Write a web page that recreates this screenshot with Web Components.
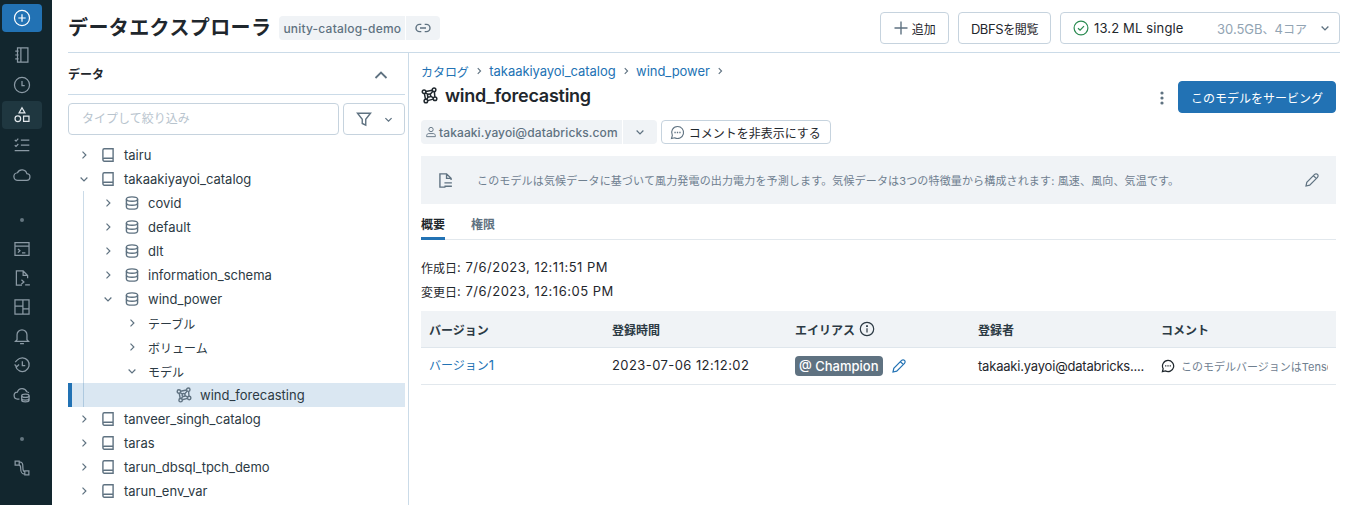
<!DOCTYPE html>
<html lang="ja">
<head>
<meta charset="utf-8">
<title>データエクスプローラ</title>
<style>
html, body { margin: 0; height: 100%; overflow: hidden; background: #fff; }
body {
    font-family: Inter, "Noto Sans CJK JP", sans-serif;
    font-size: 13px;
    color: #1f272d;
}
</style>
</head>
<body>
<explorer-app></explorer-app>

<script>
const ICONS = {
    plus: '<path d="M8 1.5v13M1.5 8h13"/>',
    'plus-circle': '<circle cx="8" cy="8" r="6.7"/><path d="M8 4.7v6.6M4.7 8h6.6"/>',
    notebook: '<path d="M4 1.75h9.25v12.5H4zM7 1.75v12.5M2 4.5h3M2 8h3M2 11.5h3"/>',
    clock: '<circle cx="8" cy="8" r="6.7"/><path d="M8 4.5V8.6h2.4"/>',
    shapes: '<path d="M8 1.5l2.6 4.6H5.4z"/><circle cx="4.3" cy="11.3" r="2.5"/><path d="M9.4 8.9h4.8v4.8H9.4z"/>',
    tasks: '<path d="M1.6 3.4l1.1 1.1 2-2.2M1.6 8.2l1.1 1.1 2-2.2M7 3.6h7.5M7 8.2h7.5M1.5 13h13"/>',
    cloud: '<path d="M4.4 12.8h7.4a3 3 0 0 0 .5-6A4.4 4.4 0 0 0 4 6a3.4 3.4 0 0 0 .4 6.8z"/>',
    terminal: '<path d="M1.75 2.25h12.5v11.5H1.75zM1.75 5.5h12.5M4.4 8l1.8 1.6-1.8 1.6M8 11.4h3"/>',
    'file-code': '<path d="M8 14.25H3V1.75h6l4 4v2.5M9 1.75v4h4M7.5 9.6l2.2 1.9-2.2 1.9M10.8 14.2H15"/>',
    dashboard: '<path d="M1.75 1.75h12.5v12.5H1.75zM8.8 1.75v12.5M1.75 7.2h7M8.8 9.6h5.45"/>',
    bell: '<path d="M3.6 11.3V6.9a4.4 4.4 0 0 1 8.8 0v4.4l1.4 1.5H2.2zM6.3 14.7h3.4"/>',
    history: '<path d="M2.4 9.3A6.1 6.1 0 1 0 3.7 3.7L2 5.4M1.4 7.5l2 1.9 2-1.9M8.3 4.6v4h2.6"/>',
    'cloud-db': '<path d="M5.7 12.5H4.3a3.1 3.1 0 0 1-.4-6.2 4.4 4.4 0 0 1 8.3-.3 3 3 0 0 1 1.9 1"/><ellipse cx="11" cy="9.6" rx="3.3" ry="1.5"/><path d="M7.7 9.6v3.9c0 .8 1.5 1.4 3.3 1.4s3.3-.6 3.3-1.4V9.6M7.7 12c0 .8 1.5 1.4 3.3 1.4s3.3-.6 3.3-1.4"/>',
    path: '<path d="M1.9 1.9h3.6v3.6H1.9zM10.5 10.5h3.6v3.6h-3.6zM5.5 2.6c3 0 3.3 1.4 3.3 5 0 3 .4 3.7 1.7 3.7M5.2 5.5c1.2 0 1.6.6 1.6 2.6 0 4 .8 5.3 3.7 5.3"/>',
    'chevron-right': '<path d="M6 3.5L10.5 8 6 12.5"/>',
    'chevron-down': '<path d="M3.5 6L8 10.5 12.5 6"/>',
    'chevron-up': '<path d="M2.5 11L8 5.5l5.5 5.5"/>',
    filter: '<path d="M1.5 2.25h13L9.75 8.2v5.9l-3.5-1.6V8.2z"/>',
    book: '<path d="M2.9 12.6V3.2c0-.8.6-1.45 1.4-1.45h8.8v12.5H4.3c-.8 0-1.4-.7-1.4-1.65zM2.9 12.5c0-.7.6-1.2 1.4-1.2h8.8"/>',
    db: '<path d="M2.4 4.1C2.4 2.8 4.9 1.9 8 1.9s5.6.9 5.6 2.2v7.8c0 1.3-2.5 2.2-5.6 2.2s-5.6-.9-5.6-2.2z"/><path d="M2.4 4.1c0 1.3 2.5 2.2 5.6 2.2s5.6-.9 5.6-2.2M2.4 8c0 1.3 2.5 2.2 5.6 2.2s5.6-.9 5.6-2.2"/>',
    model: '<circle cx="2.9" cy="4.5" r="1.7"/><circle cx="12.3" cy="2.7" r="1.7"/><circle cx="13.2" cy="11" r="1.7"/><circle cx="4.6" cy="13.2" r="1.7"/><circle cx="7.6" cy="8" r="1.5"/><path d="M4.5 4.2l6.1-1.2M4.2 5.6l2.3 1.4M11.2 4l-2.5 2.9M12.6 4.4l.4 4.9M9 8.6l2.7 1.6M6.7 9.3l-1.3 2.4M6.2 12.8l5.4-1.4M3.2 6.2l1 5.3"/>',
    user: '<circle cx="8" cy="4.7" r="2.9"/><path d="M2.2 14.2v-1.4c0-1.5 1.3-2.7 2.8-2.7h6c1.5 0 2.8 1.2 2.8 2.7v1.4z"/>',
    comment: '<path d="M8 1.6a6.4 6.4 0 1 1-3 12L1.6 14.4l.9-3.3A6.4 6.4 0 0 1 8 1.6z"/><path class="solid" d="M4.7 7.1h1.4v1.6H4.7zM7.3 7.1h1.4v1.6H7.3zM9.9 7.1h1.4v1.6H9.9z"/>',
    doc: '<path d="M8 14.25H2.75V1.75H9l4.25 4.25v1.5M9 1.75V6h4.25M7 10.2h7M7 13.4h7"/>',
    pencil: '<path d="M2 14l.8-3.7 7.8-7.9a1.9 1.9 0 0 1 2.9 2.9l-7.8 7.9zM9.4 3.6l2.9 2.9"/>',
    info: '<circle cx="8" cy="8" r="6.7"/><path d="M8 7.2v4.2"/><path class="solid" d="M7.1 4.2h1.8V6H7.1z"/>',
    link: '<path d="M6.3 4.4H4.6a3.6 3.6 0 0 0 0 7.2h1.7M9.7 4.4h1.7a3.6 3.6 0 0 1 0 7.2H9.7M5 8h6"/>',
    check: '<circle cx="8" cy="8" r="6.9"/><path d="M5 8.2l2.1 2 3.9-4"/>',
    kebab: '<circle class="solid" cx="8" cy="3" r="1.6"/><circle class="solid" cx="8" cy="8" r="1.6"/><circle class="solid" cx="8" cy="13" r="1.6"/>'
};

class UiIcon extends HTMLElement {
    connectedCallback() {
        const size = this.getAttribute('size') || 16;
        const weight = this.getAttribute('weight') || 1.4;
        this.attachShadow({ mode: 'open' }).innerHTML = `
        <style>
        :host { display: inline-flex; flex: none; width: ${size}px; height: ${size}px; color: inherit; }
        svg { width: 100%; height: 100%; fill: none; stroke: currentColor; stroke-width: ${weight}; }
        .solid { fill: currentColor; stroke: none; }
        </style>
        <svg viewBox="0 0 16 16">${ICONS[this.getAttribute('name')] || ''}</svg>`;
    }
}
customElements.define('ui-icon', UiIcon);

// the japanese glyphs in the reference run 1px smaller than the latin ones
class JaText extends HTMLElement {
    constructor() {
        super();
        // no whitespace here, the host is inline and it would show as a space
        this.attachShadow({ mode: 'open' }).innerHTML = '<style>:host { font-size: 12px; }</style><slot></slot>';
    }
}
customElements.define('ja-text', JaText);

class RailItem extends HTMLElement {
    constructor() {
        super();
        this.attachShadow({ mode: 'open' }).innerHTML = `
        <style>
        :host { display: flex; align-items: center; justify-content: center; width: 40px; height: 28px; border-radius: 4px; color: #8b9aa5; }
        :host([active]) { background: #1f3740; color: #e3e9ed; }
        :host([primary]) { background: #2272b4; color: #fff; }
        </style>
        <slot></slot>`;
    }
}
customElements.define('rail-item', RailItem);

class RailNav extends HTMLElement {
    constructor() {
        super();
        const item = (name, extra = '') => `<rail-item ${extra}><ui-icon name="${name}" size="18" weight="1.1"></ui-icon></rail-item>`;
        this.attachShadow({ mode: 'open' }).innerHTML = `
        <style>
        :host { display: flex; flex-direction: column; align-items: center; flex: none; width: 52px; height: 100%; padding: 4px 8px 0 0; box-sizing: border-box; background: #12262e; }
        .group { display: flex; flex-direction: column; gap: 2px; }
        .group.tight { gap: 1px; }
        .first { margin-top: 9px; }
        .dot { width: 4px; height: 4px; border-radius: 50%; background: #64757f; }
        .d1 { margin: 29px 0 13px; }
        .d2 { margin: 29px 0 13px; }
        </style>
        ${item('plus-circle', 'primary')}
        <div class="group first">
            ${item('notebook')}${item('clock')}${item('shapes', 'active')}${item('tasks')}${item('cloud')}
        </div>
        <div class="dot d1"></div>
        <div class="group tight">
            ${item('terminal')}${item('file-code')}${item('dashboard')}${item('bell')}${item('history')}${item('cloud-db')}
        </div>
        <div class="dot d2"></div>
        ${item('path')}`;
    }
}
customElements.define('rail-nav', RailNav);

class UiButton extends HTMLElement {
    constructor() {
        super();
        this.attachShadow({ mode: 'open' }).innerHTML = `
        <style>
        :host { display: inline-flex; align-items: center; box-sizing: border-box; height: 32px; padding: 0 12px; gap: 3px; border: 1px solid #c6d3de; border-radius: 4px; background: #fff; color: #1f272d; white-space: nowrap; }
        :host([primary]) { background: #2272b4; border-color: #2272b4; color: #fff; justify-content: center; }
        :host([small]) { height: 24px; padding: 0 9px 0 8px; }
        </style>
        <slot></slot>`;
    }
}
customElements.define('ui-button', UiButton);

class SplitPill extends HTMLElement {
    constructor() {
        super();
        this.attachShadow({ mode: 'open' }).innerHTML = `
        <style>
        :host { display: inline-flex; height: 24px; color: #5f7281; white-space: nowrap; }
        .main, .end { display: flex; align-items: center; background: #f0f3f6; }
        .main { padding: 0 4px; gap: 2px; border-radius: 4px 0 0 4px; font-weight: 500; font-size: 12px; letter-spacing: var(--pill-spacing, .2px); }
        .end { margin-left: 1px; padding: 0 var(--pill-end-pad, 9px); border-radius: 0 4px 4px 0; }
        </style>
        <span class="main"><slot></slot></span><span class="end"><slot name="end"></slot></span>`;
    }
}
customElements.define('split-pill', SplitPill);

class PageHeader extends HTMLElement {
    constructor() {
        super();
        this.attachShadow({ mode: 'open' }).innerHTML = `
        <style>
        :host { display: flex; align-items: center; flex: none; box-sizing: border-box; height: 53px; padding-top: 4px; border-bottom: 1px solid #cbdbe8; }
        h1 { margin: 0 8px 0 0; font-size: 20px; line-height: 28px; font-weight: 700; letter-spacing: .4px; color: #1f272d; white-space: nowrap; }
        .actions { display: flex; gap: 9px; margin-left: auto; }
        .gray { color: #5f7281; }
        .dbfs { letter-spacing: -.4px; }
        .cluster { width: 280px; justify-content: flex-start; padding-right: 8px; letter-spacing: .15px; }
        .spec { margin-left: auto; color: #92a4b3; margin-right: 9px; letter-spacing: 0; }
        .ok { color: #2a8a50; margin-right: 2px; }
        </style>
        <h1>データエクスプローラ</h1>
        <split-pill>unity-catalog-demo<ui-icon slot="end" name="link" size="16"></ui-icon></split-pill>
        <div class="actions">
            <ui-button><ui-icon class="gray" name="plus" size="16"></ui-icon><ja-text>追加</ja-text></ui-button>
            <ui-button><span class="dbfs">DBFS<ja-text>を閲覧</ja-text></span></ui-button>
            <ui-button class="cluster">
                <ui-icon class="ok" name="check" size="16" weight="1.2"></ui-icon>13.2 ML single
                <span class="spec">30.5GB<ja-text>、</ja-text>4<ja-text>コア</ja-text></span>
                <ui-icon class="gray" name="chevron-down" size="12" weight="1.8"></ui-icon>
            </ui-button>
        </div>`;
    }
}
customElements.define('page-header', PageHeader);

class TreeRow extends HTMLElement {
    connectedCallback() {
        const chevron = this.getAttribute('chevron');
        const icon = this.getAttribute('icon');
        const pad = this.getAttribute('pad') || 8;
        this.attachShadow({ mode: 'open' }).innerHTML = `
        <style>
        :host { display: flex; align-items: center; box-sizing: border-box; height: 24px; padding-left: ${pad}px; gap: 8px; color: #2c3a44; white-space: nowrap; }
        :host([selected]) { margin-left: -16px; border-left: 4px solid #2272b4; background: rgba(34,114,180,.17); }
        ui-icon { color: #5f7281; }
        </style>
        ${chevron ? `<ui-icon name="chevron-${chevron}" size="12" weight="1.6" style="margin:0 2px"></ui-icon>` : ''}
        ${icon ? `<ui-icon name="${icon}"></ui-icon>` : ''}
        <slot></slot>`;
    }
}
customElements.define('tree-row', TreeRow);

class TreeGroup extends HTMLElement {
    constructor() {
        super();
        this.attachShadow({ mode: 'open' }).innerHTML = `
        <style>
        :host { display: block; margin-left: 15px; border-left: 1px solid #cbdbe8; }
        </style>
        <slot></slot>`;
    }
}
customElements.define('tree-group', TreeGroup);

class DataPanel extends HTMLElement {
    constructor() {
        super();
        this.attachShadow({ mode: 'open' }).innerHTML = `
        <style>
        :host { display: flex; flex-direction: column; flex: none; box-sizing: border-box; width: 341px; height: 100%; padding-right: 3px; border-right: 1px solid #cbdbe8; overflow: hidden; }
        .head { display: flex; align-items: center; justify-content: space-between; flex: none; box-sizing: border-box; height: 42px; padding: 0 16px 0 0; border-bottom: 1px solid #cbdbe8; font-size: 12px; font-weight: 700; }
        .head ui-icon { color: #5f7281; margin-top: 3px; }
        .search { display: flex; gap: 4px; flex: none; margin: 8px 0; }
        .input { flex: 1; box-sizing: border-box; height: 32px; padding: 0 13px; line-height: 30px; border: 1px solid #c6d3de; border-radius: 4px; font-size: 12px; color: #b8c4ce; }
        .filter { box-sizing: border-box; width: 62px; height: 32px; display: flex; align-items: center; justify-content: space-between; padding: 0 10px 0 12px; border: 1px solid #c6d3de; border-radius: 4px; color: #5f7281; }
        </style>
        <div class="head">データ<ui-icon name="chevron-up" size="16" weight="1.8"></ui-icon></div>
        <div class="search">
            <div class="input">タイプして絞り込み</div>
            <div class="filter"><ui-icon name="filter"></ui-icon><ui-icon name="chevron-down" size="11" weight="1.8"></ui-icon></div>
        </div>
        <tree-row chevron="right" icon="book">tairu</tree-row>
        <tree-row chevron="down" icon="book">takaakiyayoi_catalog</tree-row>
        <tree-group>
            <tree-row pad="16" chevron="right" icon="db">covid</tree-row>
            <tree-row pad="16" chevron="right" icon="db">default</tree-row>
            <tree-row pad="16" chevron="right" icon="db">dlt</tree-row>
            <tree-row pad="16" chevron="right" icon="db">information_schema</tree-row>
            <tree-row pad="16" chevron="down" icon="db">wind_power</tree-row>
            <tree-row pad="40" chevron="right"><ja-text>テーブル</ja-text></tree-row>
            <tree-row pad="40" chevron="right"><ja-text>ボリューム</ja-text></tree-row>
            <tree-row pad="40" chevron="down"><ja-text>モデル</ja-text></tree-row>
            <tree-row pad="104" icon="model" selected>wind_forecasting</tree-row>
        </tree-group>
        <tree-row chevron="right" icon="book">tanveer_singh_catalog</tree-row>
        <tree-row chevron="right" icon="book">taras</tree-row>
        <tree-row chevron="right" icon="book">tarun_dbsql_tpch_demo</tree-row>
        <tree-row chevron="right" icon="book">tarun_env_var</tree-row>`;
    }
}
customElements.define('data-panel', DataPanel);

class VersionTable extends HTMLElement {
    constructor() {
        super();
        this.attachShadow({ mode: 'open' }).innerHTML = `
        <style>
        :host { display: grid; grid-template-columns: repeat(5, 183px); font-size: 13px; }
        .cell { display: flex; align-items: center; box-sizing: border-box; min-width: 0; padding: 0 8px; white-space: nowrap; overflow: hidden; }
        .th { height: 37px; background: #f0f3f6; border-bottom: 1px solid #dfe6ec; font-size: 12px; font-weight: 700; color: #2c3a44; gap: 4px; }
        .td { height: 37px; border-bottom: 1px solid #e2e8ed; }
        .up { padding-bottom: 3px; }
        a { color: #2272b4; }
        .stamp { letter-spacing: .42px; }
        .tag { display: inline-flex; align-items: center; height: 20px; padding: 0 4px; border-radius: 4px; background: #5f7281; color: #fff; font-weight: 500; }
        .edit { color: #2272b4; margin-left: 8px; }
        .who { letter-spacing: -.2px; padding-bottom: 1px; }
        .note { color: #6f8090; font-size: 11px; margin-left: 6px; overflow: hidden; }
        </style>
        <div class="cell th">バージョン</div>
        <div class="cell th">登録時間</div>
        <div class="cell th">エイリアス<ui-icon name="info" size="16" weight="1.2"></ui-icon></div>
        <div class="cell th">登録者</div>
        <div class="cell th">コメント</div>
        <div class="cell td up"><a><ja-text>バージョン</ja-text>1</a></div>
        <div class="cell td up"><span class="stamp">2023-07-06 12:12:02</span></div>
        <div class="cell td"><span class="tag">@ Champion</span><ui-icon class="edit" name="pencil" size="16" weight="1.2"></ui-icon></div>
        <div class="cell td who">takaaki.yayoi@databricks....</div>
        <div class="cell td"><ui-icon name="comment" size="14" weight="1.4"></ui-icon><span class="note">このモデルバージョンはTensorFlow</span></div>`;
    }
}
customElements.define('version-table', VersionTable);

class ModelDetail extends HTMLElement {
    constructor() {
        super();
        this.attachShadow({ mode: 'open' }).innerHTML = `
        <style>
        :host { display: flex; flex-direction: column; flex: 1; min-width: 0; padding: 8px 4px 0 12px; color: #1f272d; }
        .crumbs { display: flex; align-items: center; gap: 5.25px; height: 20px; color: #2272b4; letter-spacing: -.05px; }
        .crumbs ui-icon { color: #5f7281; }
        .titlebar { display: flex; align-items: center; height: 29px; }
        .titlebar h2 { margin: 0 0 0 7px; font-size: 18px; font-weight: 600; line-height: 24px; letter-spacing: -.25px; }
        .titlebar .menu { margin-left: auto; margin-right: 8px; color: #5f7281; margin-top: 5px; }
        .serve { width: 158px; margin-top: 3px; }
        .owner { display: flex; gap: 4px; margin-top: 10px; }
        .owner split-pill { --pill-spacing: .1px; --pill-end-pad: 11px; }
        .comment-btn { gap: 4px; }
        .desc { display: flex; align-items: center; height: 48px; margin-top: 12px; padding: 0 16px; background: #f0f3f6; font-size: 11px; letter-spacing: .15px; color: #6f8090; }
        .desc .doc { color: #5f7281; margin-right: 23px; }
        .desc .pen { margin-left: auto; color: #5f7281; }
        .tabs { display: flex; gap: 26px; height: 36px; box-sizing: border-box; border-bottom: 1px solid #e2e8ed; padding-top: 13px; font-size: 12px; font-weight: 700; color: #5f7281; }
        .tabs span { height: 23px; box-sizing: border-box; line-height: 16px; }
        .tabs .on { color: #1f272d; border-bottom: 3px solid #2272b4; }
        .dates { margin: 15px 0 8px; letter-spacing: .5px; }
        .dates div { display: flex; align-items: center; height: 24px; white-space: pre; }
        .dates ja-text { letter-spacing: 0; }
        </style>
        <div class="crumbs"><ja-text>カタログ</ja-text><ui-icon name="chevron-right" size="10" weight="1.8"></ui-icon>takaakiyayoi_catalog<ui-icon name="chevron-right" size="10" weight="1.8"></ui-icon>wind_power<ui-icon name="chevron-right" size="10" weight="1.8"></ui-icon></div>
        <div class="titlebar">
            <ui-icon name="model" size="17"></ui-icon>
            <h2>wind_forecasting</h2>
            <ui-icon class="menu" name="kebab"></ui-icon>
            <ui-button class="serve" primary><ja-text>このモデルをサービング</ja-text></ui-button>
        </div>
        <div class="owner">
            <split-pill><ui-icon name="user" size="12" weight="1.2"></ui-icon>takaaki.yayoi@databricks.com<ui-icon slot="end" name="chevron-down" size="12" weight="1.6"></ui-icon></split-pill>
            <ui-button small class="comment-btn"><ui-icon name="comment" size="15" weight="1.2" style="color:#5f7281"></ui-icon><ja-text>コメントを非表示にする</ja-text></ui-button>
        </div>
        <div class="desc">
            <ui-icon class="doc" name="doc" size="17" weight="1.3"></ui-icon>
            このモデルは気候データに基づいて風力発電の出力電力を予測します。気候データは3つの特徴量から構成されます: 風速、風向、気温です。
            <ui-icon class="pen" name="pencil" weight="1.2"></ui-icon>
        </div>
        <div class="tabs"><span class="on">概要</span><span>権限</span></div>
        <div class="dates">
            <div><ja-text>作成日</ja-text>: 7/6/2023, 12:11:51 PM</div>
            <div><ja-text>変更日</ja-text>: 7/6/2023, 12:16:05 PM</div>
        </div>
        <version-table></version-table>`;
    }
}
customElements.define('model-detail', ModelDetail);

class ExplorerApp extends HTMLElement {
    constructor() {
        super();
        this.attachShadow({ mode: 'open' }).innerHTML = `
        <style>
        :host { display: flex; height: 505px; overflow: hidden; }
        .main { display: flex; flex-direction: column; flex: 1; min-width: 0; padding: 0 10px 0 16px; }
        .body { display: flex; flex: 1; min-height: 0; }
        </style>
        <rail-nav></rail-nav>
        <div class="main">
            <page-header></page-header>
            <div class="body">
                <data-panel></data-panel>
                <model-detail></model-detail>
            </div>
        </div>`;
    }
}
customElements.define('explorer-app', ExplorerApp);
</script>
</body>
</html>
